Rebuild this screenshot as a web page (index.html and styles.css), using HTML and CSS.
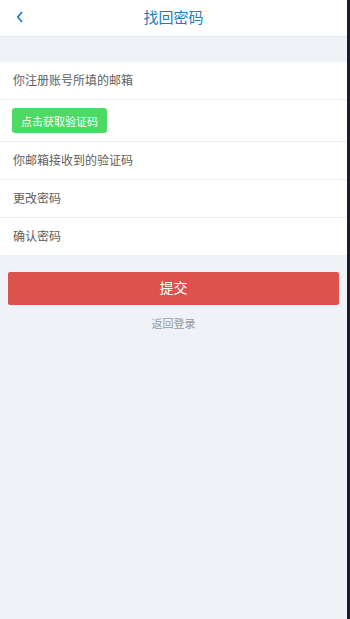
FILE: index.html
```html
<!DOCTYPE html>
<html>
<head>
<meta charset="utf-8">
<link rel="stylesheet" href="styles.css">
</head>
<body>
<div class="screen">
  <div class="app">
    <header class="bar">
      <span class="back"><svg width="8" height="12" viewBox="0 0 8 12"><path d="M6 1 L1.8 6 L6 11" fill="none" stroke="#1a7cc4" stroke-width="1.7"/></svg></span>
      <h1 class="title">找回密码</h1>
    </header>
    <div class="gap"></div>
    <div class="form">
      <div class="row"><span class="ph">你注册账号所填的邮箱</span></div>
      <div class="row row-btn"><button class="code-btn">点击获取验证码</button></div>
      <div class="row"><span class="ph">你邮箱接收到的验证码</span></div>
      <div class="row"><span class="ph">更改密码</span></div>
      <div class="row last"><span class="ph">确认密码</span></div>
    </div>
    <div class="actions">
      <button class="submit">提交</button>
      <a class="link">返回登录</a>
    </div>
  </div>
  <div class="edge"></div>
</div>
</body>
</html>
```
FILE: styles.css
```css
html, body { margin: 0; padding: 0; height: 100%; }
body { font-family: "Noto Sans CJK SC", "Noto Sans", sans-serif; }
.screen { display: flex; height: 619px; width: 350px; }
.app { flex: 1; background: #eff2f7; display: flex; flex-direction: column; }
.edge { width: 3px; background: #1c1c2b; }
.bar { height: 37px; background: #fff; border-bottom: 1px solid #e4e6ea; display: flex; align-items: center; justify-content: center; position: relative; padding-bottom: 0; box-sizing: border-box; }
.back { position: absolute; left: 16px; top: 11px; height: 12px; line-height: 0; }
.title { margin: 0 0 3px; font-size: 15px; font-weight: normal; color: #1a7cc4; line-height: 1; }
.gap { height: 25px; }
.form { background: #fff; }
.row { height: 37px; border-bottom: 1px solid #eceef1; display: flex; align-items: center; padding-left: 13px; }
.row.last { border-bottom: none; }
.row-btn { height: 41px; padding-left: 12px; }
.ph { font-size: 12px; color: #5e5e5e; margin-top: -2px; }
.code-btn { background: #4cd964; border: none; border-radius: 3px; color: #fff; font-family: inherit; font-size: 11px; width: 95px; height: 25px; padding: 0; }
.actions { padding: 17px 8px 0; display: flex; flex-direction: column; align-items: center; }
.submit { width: 100%; height: 33px; background: #dd524d; color: #fff; border: none; border-radius: 2px; font-family: inherit; font-size: 14px; padding: 0 0 3px; }
.link { margin-top: 10px; font-size: 11px; color: #999; }
```
